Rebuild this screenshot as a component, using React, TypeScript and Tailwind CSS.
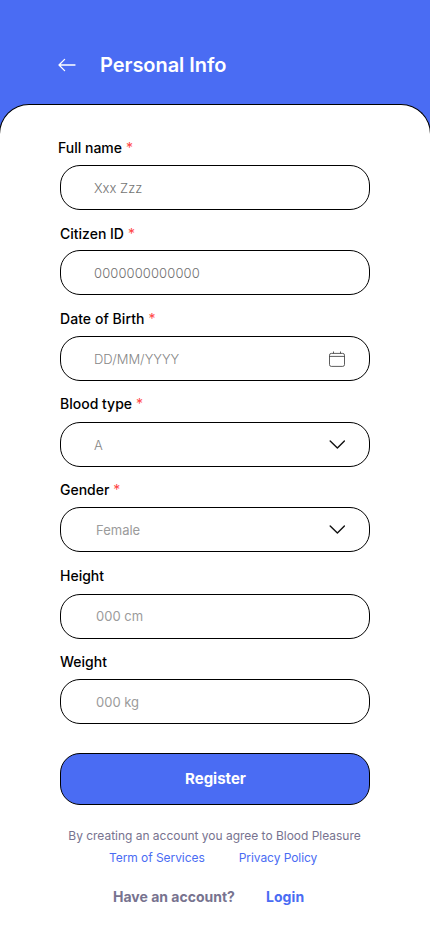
import React from "react";

type Field = {
  label: string;
  hint: string;
  required?: boolean;
  icon?: "calendar" | "chevron";
  labelClass: string;
  boxClass: string;
  hintClass: string;
};

const fields: Field[] = [
  { label: "Full name", hint: "Xxx Zzz", required: true, labelClass: "-ml-0.5", boxClass: "mt-[7px] mb-3.5", hintClass: "ml-[33px] font-light text-[#747474]" },
  { label: "Citizen ID", hint: "0000000000000", required: true, labelClass: "", boxClass: "mt-1.5 mb-3.5", hintClass: "ml-[33px] font-light tracking-[0.11px] text-[#707070]" },
  { label: "Date of Birth", hint: "DD/MM/YYYY", required: true, icon: "calendar", labelClass: "tracking-[0.06px]", boxClass: "mt-[7px] mb-[13px]", hintClass: "ml-[33px] font-light text-[#868686]" },
  { label: "Blood type", hint: "A", required: true, icon: "chevron", labelClass: "", boxClass: "mt-2 mb-[13px]", hintClass: "ml-[33px] font-light text-[#868686]" },
  { label: "Gender", hint: "Female", required: true, icon: "chevron", labelClass: "", boxClass: "mt-[7px] mb-3.5", hintClass: "ml-[35px] text-[#9b9b9b]" },
  { label: "Height", hint: "000 cm", labelClass: "", boxClass: "mt-2 mb-[13px]", hintClass: "ml-[35px] -mt-px text-[#9b9b9b]" },
  { label: "Weight", hint: "000 kg", labelClass: "", boxClass: "mt-[7px]", hintClass: "ml-[35px] text-[#9b9b9b]" },
];

function BackArrow() {
  return (
    <svg width="18" height="14" viewBox="0 0 18 14" fill="none" stroke="white" strokeWidth="1.3" strokeLinecap="round" strokeLinejoin="round">
      <path d="M17 7H1.2M6.6 1.4L1 7L6.6 12.6" />
    </svg>
  );
}

function CalendarIcon() {
  return (
    <svg width="16" height="16" viewBox="0 0 16 16" fill="none" stroke="#333" strokeWidth="0.8" className="mr-6">
      <rect x="0.5" y="2.4" width="15" height="13" rx="1.8" />
      <path d="M0.5 5.4H15.5M4.5 0.5V2.4M11.5 0.5V2.4" />
    </svg>
  );
}

function ChevronIcon() {
  return (
    <svg width="16" height="9" viewBox="0 0 16 9" fill="none" stroke="#111" strokeWidth="1.4" strokeLinecap="round" strokeLinejoin="round" className="mr-6">
      <path d="M1.2 1L8.4 8.1L15.4 1" />
    </svg>
  );
}

function FormField({ field }: { field: Field }) {
  return (
    <div>
      <div className={`h-5 text-sm leading-5 font-medium whitespace-nowrap text-black ${field.labelClass}`}>
        {field.label}
        {field.required && <span className="font-normal text-[#ff4545]"> *</span>}
      </div>
      <div className={`flex h-[45px] items-center justify-between rounded-[20px] border border-black bg-white ${field.boxClass}`}>
        <span className={`text-[13px] leading-5 ${field.hintClass}`}>{field.hint}</span>
        {field.icon === "calendar" && <CalendarIcon />}
        {field.icon === "chevron" && <ChevronIcon />}
      </div>
    </div>
  );
}

export default function App() {
  return (
    <div className="flex h-[932px] w-[430px] flex-col overflow-hidden bg-[#4a6cf3] font-['Inter',sans-serif]">
      <header className="flex h-[104px] shrink-0 items-center pt-[26px] pl-[58px]">
        <BackArrow />
        <h1 className="ml-6 text-xl leading-7 font-semibold tracking-[-0.04px] text-white">Personal Info</h1>
      </header>
      <main className="-mx-px flex grow flex-col rounded-t-[30px] border border-b-0 border-black bg-white">
        <form className="mx-[60px] pt-[33px]">
          {fields.map((field) => (
            <FormField key={field.label} field={field} />
          ))}
          <button type="button" className="mt-[29px] h-[52px] w-full rounded-[20px] border border-black bg-[#4a6cf3] pl-px text-[15px] leading-5 font-bold text-white">
            Register
          </button>
        </form>
        <p className="mt-[21px] pr-px text-center text-xs leading-5 tracking-[-0.02px] text-[#77738f]">By creating an account you agree to Blood Pleasure</p>
        <div className="mt-0.5 flex gap-[34px] pl-[109px] text-xs leading-5 tracking-[-0.06px] whitespace-nowrap text-[#4a6cf3]">
          <a>Term of Services</a>
          <a>Privacy Policy</a>
        </div>
        <div className="mt-[19px] flex gap-[31px] pl-[113px] text-sm leading-5 font-bold whitespace-nowrap">
          <span className="text-[#77738f]">Have an account?</span>
          <a className="tracking-[0.1px] text-[#4a6cf3]">Login</a>
        </div>
      </main>
    </div>
  );
}
